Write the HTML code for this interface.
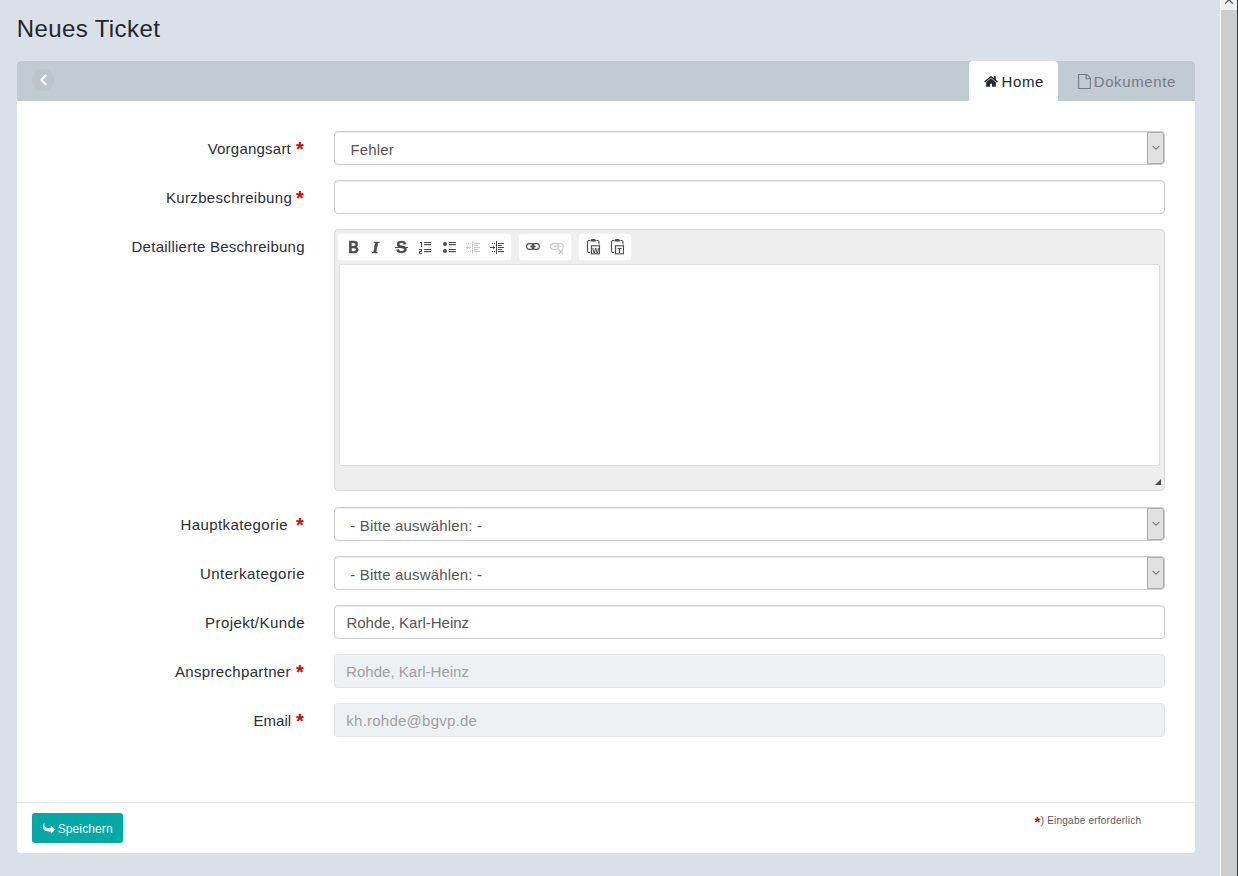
<!DOCTYPE html>
<html lang="de">
<head>
<meta charset="utf-8">
<title>Neues Ticket</title>
<style>
*{box-sizing:border-box;}
html,body{margin:0;padding:0;}
body{width:1238px;height:876px;overflow:hidden;background:#dae0e8;font-family:"Liberation Sans",sans-serif;font-size:15px;color:#2a2e36;position:relative;}
.tx{position:absolute;white-space:nowrap;line-height:1;margin:0;padding:0;}
.abs{position:absolute;}
.panel{position:absolute;left:17px;top:61px;width:1178px;height:792px;background:#fff;border-radius:4px;}
.phead{position:absolute;left:17px;top:61px;width:1178px;height:40px;background:#c1cbd2;border-radius:4px 4px 0 0;}
.back{position:absolute;left:32px;top:69px;width:22px;height:22px;border-radius:50%;background:#bac5cc;}
.tabact{position:absolute;left:969px;top:61px;width:89px;height:40px;background:#fff;border-radius:4px 4px 0 0;}
.ctl{position:absolute;left:334px;width:831px;height:34px;border:1px solid #ccc;border-radius:4px;background:#fff;box-shadow:inset 0 1px 1px rgba(0,0,0,.075);}
.ctl.dis{background:#eef1f3;border-color:#e2e6e9;box-shadow:none;}
.dd{position:absolute;right:0;top:0;width:17px;height:32px;background:#e1e1e1;border:1px solid #adadad;border-radius:0 3px 3px 0;}
.dd svg{position:absolute;left:3.6px;top:12.3px;}
.ed{position:absolute;left:334px;top:229px;width:831px;height:262px;background:#eee;border:1px solid #dadada;border-radius:4px;}
.edc{position:absolute;left:339px;top:264px;width:821px;height:202px;background:#fff;border:1px solid #dedede;border-radius:2px;}
.tg{position:absolute;top:234px;height:26px;background:#fff;border-radius:3px;box-shadow:0 0 0 0.5px #f6f6f6;}
.footline{position:absolute;left:17px;top:802px;width:1178px;height:1px;background:#e9eaec;}
.btn{position:absolute;left:32px;top:813px;width:91px;height:30px;background:#04a9a6;border-radius:3px;}
.sb{position:absolute;left:1220px;top:0;width:17px;height:876px;background:#f0f0f0;border-left:1px solid #fafafa;}
.sb .thumb{position:absolute;left:0;top:10px;width:16px;height:866px;background:#cdcdcd;}
.edge{position:absolute;left:1237px;top:0;width:1px;height:876px;background:#1d3f5e;}
</style>
</head>
<body>
<div class="panel"></div>
<div class="phead"></div>
<div class="back"></div>
<svg class="abs" style="left:32px;top:69px" width="22" height="22" viewBox="32 69 22 22"><path d="M45.6 75.6 L41.4 79.9 L45.6 84.2" fill="none" stroke="#fff" stroke-width="2.2" stroke-linecap="round" stroke-linejoin="round"/></svg>
<div class="tabact"></div>
<!-- tab icons -->
<svg class="abs" style="left:984px;top:74px" width="14" height="15" viewBox="0 0 1664 1792"><path fill="#22262e" d="M1408 992v480q0 26-19 45t-45 19h-384v-384h-256v384h-384q-26 0-45-19t-19-45v-480q0-1 .5-3t.5-3l575-474 575 474q1 2 1 6zm223-69l-62 74q-8 9-21 11h-3q-13 0-21-7l-692-577-692 577q-12 8-24 7-13-2-21-11l-62-74q-8-10-7-23.500t11-21.500l719-599q32-26 76-26t76 26l244 204v-195q0-14 9-23t23-9h192q14 0 23 9t9 23v408l219 182q10 8 11 21.500t-7 23.500z"/></svg>
<svg class="abs" style="left:1078px;top:74px" width="13" height="15" viewBox="0 0 1536 1792"><path fill="#767b86" d="M1468 380q28 28 48 76t20 88v1152q0 40-28 68t-68 28h-1344q-40 0-68-28t-28-68v-1600q0-40 28-68t68-28h896q40 0 88 20t76 48zm-444-244v376h376q-10-29-22-41l-313-313q-12-12-41-22zm384 1528v-1024h-416q-40 0-68-28t-28-68v-416h-768v1536h1280z"/></svg>

<!-- fields -->
<div class="ctl" style="top:131px"><div class="dd"><svg width="8" height="6" viewBox="0 0 8 6"><path d="M0.6 0.9 L4 4.3 L7.4 0.9" fill="none" stroke="#444" stroke-width="1"/></svg></div></div>
<div class="ctl" style="top:180px"></div>
<div class="ctl" style="top:507px"><div class="dd"><svg width="8" height="6" viewBox="0 0 8 6"><path d="M0.6 0.9 L4 4.3 L7.4 0.9" fill="none" stroke="#444" stroke-width="1"/></svg></div></div>
<div class="ctl" style="top:556px"><div class="dd"><svg width="8" height="6" viewBox="0 0 8 6"><path d="M0.6 0.9 L4 4.3 L7.4 0.9" fill="none" stroke="#444" stroke-width="1"/></svg></div></div>
<div class="ctl" style="top:605px"></div>
<div class="ctl dis" style="top:654px"></div>
<div class="ctl dis" style="top:703px"></div>

<!-- editor -->
<div class="ed"></div>
<div class="edc"></div>
<div class="tg" style="left:338px;width:173px"></div>
<div class="tg" style="left:519px;width:52px"></div>
<div class="tg" style="left:579px;width:52px"></div>
<svg class="abs" style="left:334px;top:230px;will-change:transform" width="300" height="34" viewBox="334 230 300 34" font-family="'Liberation Sans',sans-serif">
<g fill="#4d4d4d">
<text transform="translate(348.2 252.9) scale(0.88 1)" font-size="16.8" font-weight="700" stroke="#4d4d4d" stroke-width="0.5">B</text>
<text x="372.2" y="252.9" font-size="17" font-weight="700" font-style="italic" font-family="'Liberation Serif',serif" stroke="#4d4d4d" stroke-width="0.5">I</text>
<text x="395.9" y="252.9" font-size="16.6" font-weight="700" stroke="#4d4d4d" stroke-width="0.35">S</text>
<rect x="395" y="247" width="13" height="1"/>
</g>
<!-- numbered list -->
<g fill="#4d4d4d">
<rect x="424" y="242" width="7" height="1"/><rect x="424" y="244" width="7" height="1.2"/>
<rect x="424" y="249" width="7" height="1"/><rect x="424" y="251" width="7" height="1.2"/>
<path d="M420 242h2v5h-1v-4h-1z"/>
<path d="M419 249h3v3h-2v1h2v1h-3v-3h2v-1h-2z"/>
</g>
<!-- bulleted list -->
<g fill="#4d4d4d">
<circle cx="445" cy="244" r="2"/><circle cx="445" cy="251" r="2"/>
<rect x="449" y="242" width="7" height="1"/><rect x="449" y="244" width="7" height="1.2"/>
<rect x="449" y="249" width="7" height="1"/><rect x="449" y="251" width="7" height="1.2"/>
</g>
<!-- outdent (disabled) -->
<g fill="#c9c9c9">
<rect x="472" y="241" width="1" height="13"/>
<rect x="474" y="243" width="6" height="1"/><rect x="474" y="245" width="4" height="1"/><rect x="474" y="247" width="6" height="1"/><rect x="474" y="249" width="4" height="1"/><rect x="474" y="251" width="6" height="1"/>
<rect x="466" y="247" width="5" height="1"/><path d="M468 245.500l-2 2 2 2z"/>
<rect x="468" y="243" width="1" height="1"/><rect x="470" y="243" width="1" height="1"/><rect x="468" y="251" width="1" height="1"/><rect x="470" y="251" width="1" height="1"/>
</g>
<!-- indent -->
<g fill="#4d4d4d">
<rect x="496" y="241" width="1" height="13"/>
<rect x="498" y="243" width="6" height="1"/><rect x="498" y="245" width="4" height="1"/><rect x="498" y="247" width="6" height="1"/><rect x="498" y="249" width="4" height="1"/><rect x="498" y="251" width="6" height="1"/>
<rect x="490" y="247" width="5" height="1"/><path d="M493 245.500l2 2-2 2z"/>
<rect x="492" y="243" width="1" height="1"/><rect x="494" y="243" width="1" height="1"/><rect x="492" y="251" width="1" height="1"/><rect x="494" y="251" width="1" height="1"/>
</g>
<!-- link -->
<g fill="none" stroke="#4d4d4d" stroke-width="1.1">
<rect x="526.600" y="243.600" width="7.400" height="5.800" rx="2.900"/>
<rect x="532" y="243.600" width="7.400" height="5.800" rx="2.900"/>
<path d="M530.300 246.500h5.400" stroke-width="1.400"/>
</g>
<!-- unlink (disabled) -->
<g fill="none" stroke="#cfcfcf" stroke-width="1.300">
<rect x="550.600" y="243.600" width="8" height="5.800" rx="2.900"/>
<path d="M557 243.600h3.500a2.900 2.900 0 0 1 2 5"/>
<path d="M553.500 246.500h7"/>
<path d="M558.500 249.500l4.500 4.500M563 249.500l-4.500 4.500" stroke="#c4c4c4"/>
</g>
<!-- paste from word -->
<g fill="none" stroke="#4d4d4d" stroke-width="1.100">
<path d="M590 240.500h-1a1.500 1.500 0 0 0-1.500 1.500v9a1.500 1.500 0 0 0 1.500 1.500h.8"/>
<path d="M596.500 240.500h1a1.500 1.500 0 0 1 1.500 1.500v2.500"/>
<rect x="591.500" y="245.800" width="8" height="8"/>
</g>
<path d="M590.500 241.500v-1l1-1.500h3.500l1 1.500v1z" fill="#4d4d4d"/>
<text x="592.300" y="252.700" font-size="7.4" font-weight="700" fill="#444">W</text>
<!-- paste text -->
<g fill="none" stroke="#4d4d4d" stroke-width="1.100">
<path d="M614 240.500h-1a1.500 1.500 0 0 0-1.500 1.500v9a1.500 1.500 0 0 0 1.500 1.500h.8"/>
<path d="M620.500 240.500h1a1.500 1.500 0 0 1 1.500 1.500v2.500"/>
<rect x="615.500" y="245.800" width="8" height="8"/>
</g>
<path d="M614.500 241.500v-1l1-1.500h3.500l1 1.500v1z" fill="#4d4d4d"/>
<text x="617.200" y="252.700" font-size="7.4" font-weight="700" fill="#444">T</text>
</svg>

<svg class="abs" style="left:1155px;top:479px" width="6" height="6" viewBox="0 0 6 6"><path d="M6 0 V6 H0 Z" fill="#4a4a4a"/></svg>

<!-- footer -->
<div class="footline"></div>
<div class="btn"></div>
<svg class="abs" style="left:43px;top:822px" width="12" height="12" viewBox="0 0 1792 1792"><g transform="translate(0,1792) scale(1,-1)"><path fill="#fff" d="M1792 640q0 26-19 45l-512 512q-19 19-45 19t-45-19-19-45v-256h-224q-98 0-175.500 6t-154 21.500-133 42.500-105.500 69.500-80 101-48.500 138.500-17.500 181q0 55 5 123 0 6 2.500 23.500t2.500 26.500q0 15-8.500 25t-23.500 10q-16 0-28-17-7-9-13-22t-13.500-30-10.500-24q-127-285-127-451 0-199 53-333 162-403 875-403h224v-256q0-26 19-45t45-19 45 19l512 512q19 19 19 45z"/></g></svg>

<span class="tx" id="t_h1" style="left:16.74px;top:17.00px;font-size:24px;color:#22262e;font-weight:400;letter-spacing:0.394px">Neues Ticket</span>
<span class="tx" id="t_home" style="left:1001.50px;top:73.60px;font-size:15px;color:#22262e;font-weight:400;letter-spacing:0.631px">Home</span>
<span class="tx" id="t_dok" style="left:1093.68px;top:73.60px;font-size:15px;color:#767b86;font-weight:400;letter-spacing:0.634px">Dokumente</span>
<span class="tx" id="t_l1" style="left:207.64px;top:141.00px;font-size:15px;color:#2a2e36;font-weight:400;letter-spacing:0.226px">Vorgangsart</span>
<span class="tx" id="t_a1" style="left:296.08px;top:139.00px;font-size:20px;color:#dc0000;font-weight:700;letter-spacing:0.000px">*</span>
<span class="tx" id="t_l2" style="left:166.05px;top:190.00px;font-size:15px;color:#2a2e36;font-weight:400;letter-spacing:0.322px">Kurzbeschreibung</span>
<span class="tx" id="t_a2" style="left:296.08px;top:188.00px;font-size:20px;color:#dc0000;font-weight:700;letter-spacing:0.000px">*</span>
<span class="tx" id="t_l3" style="left:131.50px;top:239.00px;font-size:15px;color:#2a2e36;font-weight:400;letter-spacing:0.262px">Detaillierte Beschreibung</span>
<span class="tx" id="t_l4" style="left:180.50px;top:517.00px;font-size:15px;color:#2a2e36;font-weight:400;letter-spacing:0.412px">Hauptkategorie</span>
<span class="tx" id="t_a4" style="left:296.08px;top:515.00px;font-size:20px;color:#dc0000;font-weight:700;letter-spacing:0.000px">*</span>
<span class="tx" id="t_l5" style="left:199.94px;top:566.00px;font-size:15px;color:#2a2e36;font-weight:400;letter-spacing:0.477px">Unterkategorie</span>
<span class="tx" id="t_l6" style="left:205.08px;top:615.00px;font-size:15px;color:#2a2e36;font-weight:400;letter-spacing:0.439px">Projekt/Kunde</span>
<span class="tx" id="t_l7" style="left:174.90px;top:664.00px;font-size:15px;color:#2a2e36;font-weight:400;letter-spacing:0.336px">Ansprechpartner</span>
<span class="tx" id="t_a7" style="left:296.08px;top:662.00px;font-size:20px;color:#dc0000;font-weight:700;letter-spacing:0.000px">*</span>
<span class="tx" id="t_l8" style="left:253.38px;top:713.00px;font-size:15px;color:#2a2e36;font-weight:400;letter-spacing:0.059px">Email</span>
<span class="tx" id="t_a8" style="left:296.08px;top:711.00px;font-size:20px;color:#dc0000;font-weight:700;letter-spacing:0.000px">*</span>
<span class="tx" id="t_v1" style="left:350.44px;top:142.00px;font-size:15px;color:#555;font-weight:400;letter-spacing:0.145px">Fehler</span>
<span class="tx" id="t_v4" style="left:350.35px;top:518.00px;font-size:15px;color:#555;font-weight:400;letter-spacing:0.165px">- Bitte auswählen: -</span>
<span class="tx" id="t_v5" style="left:350.35px;top:567.00px;font-size:15px;color:#555;font-weight:400;letter-spacing:0.165px">- Bitte auswählen: -</span>
<span class="tx" id="t_v6" style="left:346.44px;top:615.00px;font-size:15px;color:#555;font-weight:400;letter-spacing:0.006px">Rohde, Karl-Heinz</span>
<span class="tx" id="t_v7" style="left:346.08px;top:664.00px;font-size:15px;color:#a0a0a0;font-weight:400;letter-spacing:0.020px">Rohde, Karl-Heinz</span>
<span class="tx" id="t_v8" style="left:346.34px;top:713.00px;font-size:15px;color:#a0a0a0;font-weight:400;letter-spacing:0.236px">kh.rohde@bgvp.de</span>
<span class="tx" id="t_btn" style="left:57.68px;top:822.60px;font-size:12px;color:#fff;font-weight:400;letter-spacing:0.114px">Speichern</span>
<span class="tx" id="t_na" style="left:1034.55px;top:814.00px;font-size:15px;color:#dc0000;font-weight:700;letter-spacing:0.000px">*</span>
<span class="tx" id="t_n" style="left:1040.66px;top:816.00px;font-size:10px;color:#5a5a5a;font-weight:400;letter-spacing:0.224px">) Eingabe erforderlich</span>

<div class="sb"><div class="thumb"></div></div>
<svg class="abs" style="left:1221px;top:0" width="16" height="10" viewBox="0 0 16 10"><path d="M4.2 3.6 L8 -0.2 L11.8 3.6" fill="none" stroke="#505050" stroke-width="1.3"/></svg>
<div class="edge"></div>
</body>
</html>
